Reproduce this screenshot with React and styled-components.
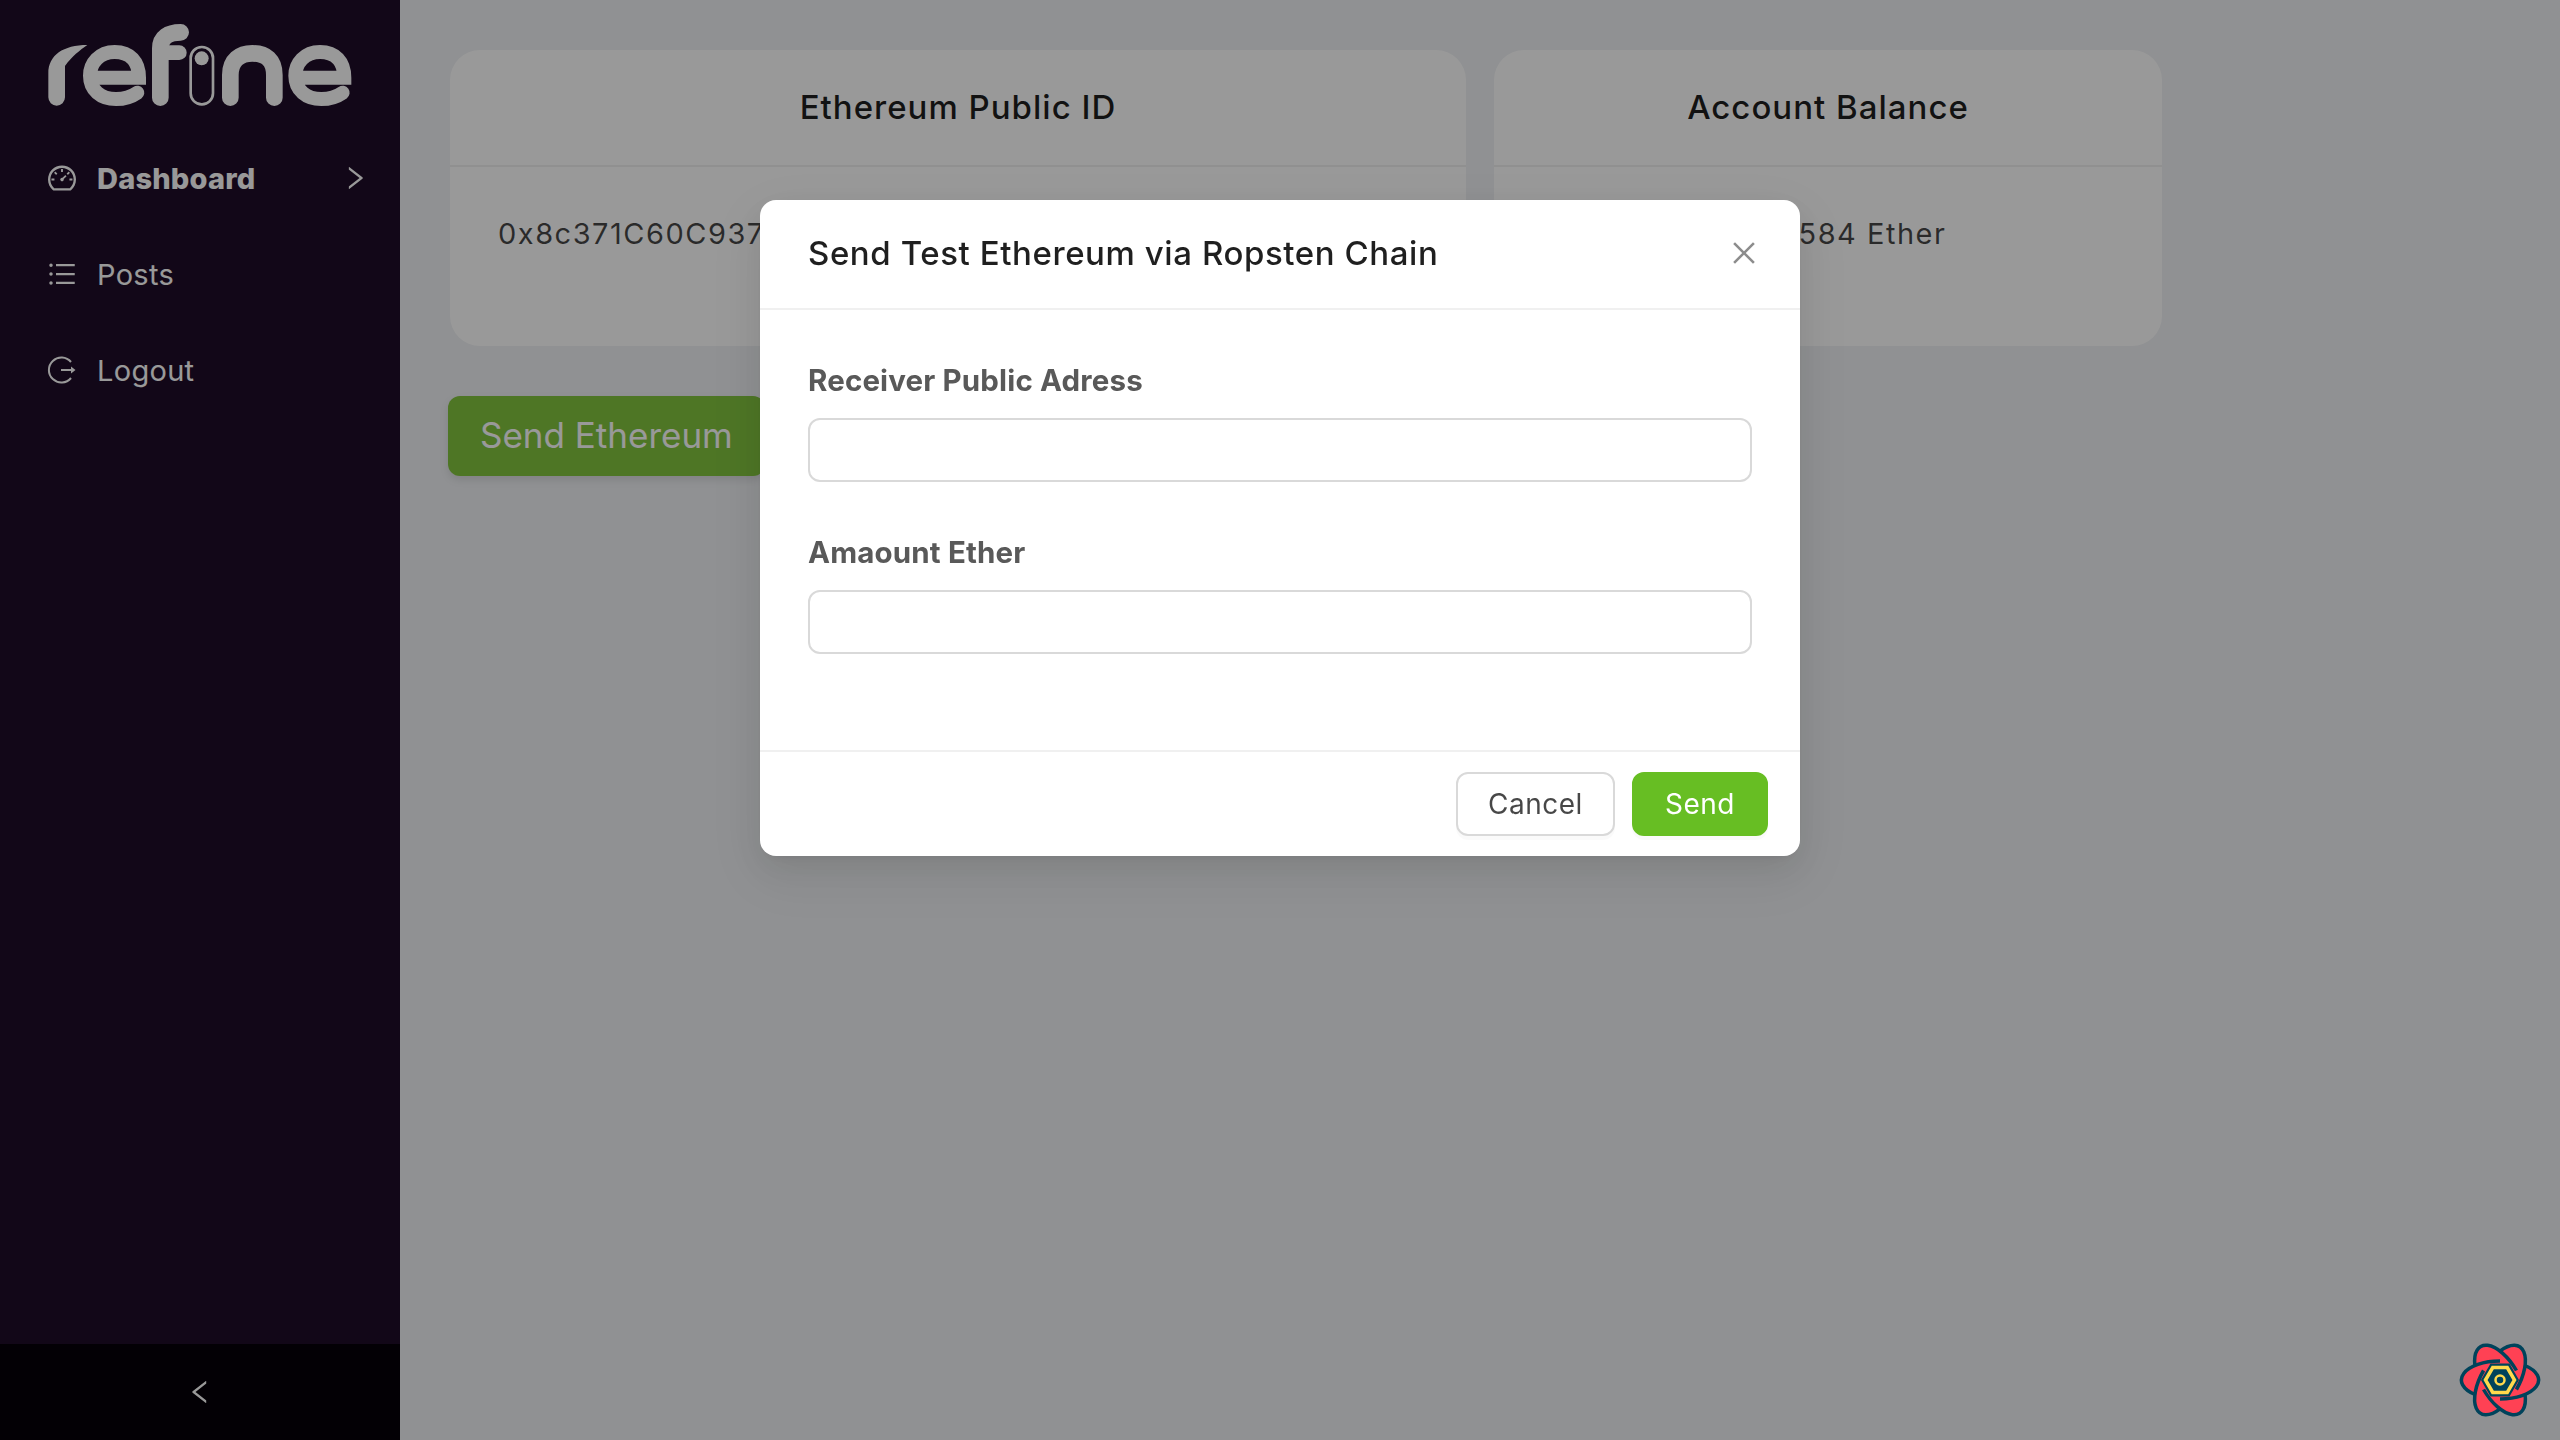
import React from 'react'
import styled, { createGlobalStyle } from 'styled-components'
import {
  AiOutlineDashboard,
  AiOutlineUnorderedList,
  AiOutlineRight,
  AiOutlineLeft,
  AiOutlineClose,
} from 'react-icons/ai'

const GlobalStyle = createGlobalStyle`
  html, body {
    margin: 0;
    padding: 0;
    overflow: hidden;
    font-family: 'Inter', 'Noto Sans', sans-serif;
  }
  * {
    box-sizing: border-box;
  }
`

const Page = styled.div`
  display: flex;
  width: 100%;
  height: 100vh;
  background: #f0f2f5;
`

// sidebar

const Sider = styled.aside`
  display: flex;
  flex-direction: column;
  flex: 0 0 400px;
  background: #1e0c28;
  color: #fff;
`

const LogoBox = styled.div`
  padding: 10px 30px 18px;
  line-height: 0;
`

const Menu = styled.nav`
  flex: 1;
`

const MenuRow = styled.div`
  display: flex;
  align-items: center;
  gap: 19px;
  height: 80px;
  margin-bottom: 16px;
  padding: 0 30px 0 46px;
  font-size: 29px;
  letter-spacing: ${(p) => (p.$active ? '0.2px' : '0.3px')};
  font-weight: ${(p) => (p.$active ? 800 : 400)};

  svg {
    flex: none;
  }
`

const MenuLabel = styled.span`
  flex: 1;
`

const SiderFooter = styled.div`
  display: flex;
  align-items: center;
  justify-content: center;
  height: 96px;
  background: #060009;
`

// main content

const Main = styled.main`
  flex: 1;
  padding: 50px;
`

const Cards = styled.div`
  display: flex;
  gap: 28px;
`

const Card = styled.section`
  flex: 0 0 ${(p) => p.$width}px;
  overflow: hidden;
  background: #fff;
  border-radius: 30px;
`

const CardHead = styled.h2`
  height: 117px;
  margin: 0;
  padding-top: 35px;
  border-bottom: 2px solid #f0f0f0;
  font-size: 33px;
  line-height: 44px;
  font-weight: 500;
  letter-spacing: 1px;
  text-align: center;
  color: rgba(0, 0, 0, 0.88);
`

const CardBody = styled.div`
  height: 179px;
  padding: 45px 48px;
  font-size: 29px;
  line-height: 44px;
  letter-spacing: 1.5px;
  white-space: nowrap;
  color: rgba(0, 0, 0, 0.72);
`

const SendEthereum = styled.button`
  display: block;
  height: 80px;
  margin: 50px 0 0 -2px;
  padding: 0 32px 2px;
  border: 0;
  border-radius: 12px;
  background: #82c53f;
  box-shadow: 0 4px 8px rgba(0, 0, 0, 0.1);
  font: 400 35px 'Inter', sans-serif;
  color: #fff;
`

// modal

const Mask = styled.div`
  position: fixed;
  inset: 0;
  display: flex;
  justify-content: center;
  align-items: flex-start;
  padding-top: 200px;
  background: rgba(0, 0, 0, 0.4);
`

const Modal = styled.div`
  width: 1040px;
  background: #fff;
  border-radius: 16px;
  box-shadow: 0 6px 12px -8px rgba(0, 0, 0, 0.12), 0 12px 32px rgba(0, 0, 0, 0.08),
    0 18px 56px 16px rgba(0, 0, 0, 0.05);
`

const ModalHead = styled.header`
  display: flex;
  align-items: center;
  justify-content: space-between;
  height: 110px;
  padding: 0 40px 2px 48px;
  border-bottom: 2px solid #f0f0f0;
`

const ModalTitle = styled.h1`
  margin: 0;
  font-size: 33px;
  font-weight: 500;
  letter-spacing: 0.58px;
  color: rgba(0, 0, 0, 0.88);
`

const CloseIcon = styled(AiOutlineClose)`
  color: rgba(0, 0, 0, 0.45);
`

const ModalBody = styled.div`
  padding: 48px 48px 0;
  border-bottom: 2px solid #f0f0f0;
`

const Field = styled.div`
  margin-bottom: 48px;

  &:last-child {
    margin-bottom: 96px;
  }
`

const Label = styled.label`
  display: block;
  height: 44px;
  margin-bottom: 16px;
  font-size: 29.5px;
  line-height: 44px;
  font-weight: 700;
  letter-spacing: 0.15px;
  color: #595959;
`

const Input = styled.input`
  display: block;
  width: 100%;
  height: 64px;
  border: 2px solid #d9d9d9;
  border-radius: 12px;
  background: #fff;
  outline: none;
`

const ModalFooter = styled.footer`
  display: flex;
  justify-content: flex-end;
  gap: 17px;
  padding: 20px 32px;
`

const FooterButton = styled.button`
  width: ${(p) => p.$width}px;
  height: 64px;
  padding: 0;
  border: 2px solid ${(p) => (p.$primary ? '#67be23' : '#d9d9d9')};
  border-radius: 12px;
  background: ${(p) => (p.$primary ? '#67be23' : '#fff')};
  box-shadow: 0 4px 0 rgba(0, 0, 0, 0.02);
  font: 400 28px 'Inter', sans-serif;
  letter-spacing: 0.5px;
  color: ${(p) => (p.$primary ? '#fff' : 'rgba(0, 0, 0, 0.72)')};
`

const DevtoolsButton = styled.div`
  position: fixed;
  right: 19px;
  bottom: 22px;
  line-height: 0;
`

// drawings

function RefineLogo() {
  const letterE =
    'M182 203 H327 C327 155 300 126 254 126 C208 126 180 160 180 197 C180 240 212 267 258 267 C285 267 305 260 322 248'
  return (
    <svg width="340" height="110" viewBox="0 0 1020 330" fill="none" stroke="currentColor" strokeLinecap="round">
      <path
        fill="currentColor"
        stroke="none"
        d="M55 190 C55 135 100 105 172 105 C150 120 125 140 105 168 V262 A25 25 0 0 1 55 262 Z"
      />
      <path strokeWidth="42" d={letterE} />
      <path strokeWidth="50" d="M391 263 V115 C391 82 415 67 452 67" />
      <path strokeWidth="44" d="M391 128 H448" />
      <rect x="482" y="111" width="67" height="172" rx="33" strokeWidth="8" />
      <circle cx="515" cy="145" r="21" fill="currentColor" stroke="none" />
      <path strokeWidth="50" d="M601 263 V195 C601 150 630 130 667 130 C708 130 733 150 733 195 V263" />
      <path strokeWidth="42" d={letterE} transform="translate(616 0)" />
    </svg>
  )
}

function LogoutIcon() {
  return (
    <svg width="32" height="32" viewBox="-2 -2 32 32" fill="none" stroke="currentColor" strokeWidth="2">
      <path d="M23 6 A12.5 12.5 0 1 0 23 22" />
      <path d="M13 14 H25" />
      <path d="M23 10.5 L27.5 14 L23 17.5 Z" fill="currentColor" stroke="none" />
    </svg>
  )
}

// each arc runs past the tip of a petal and stops where the next ellipse crosses it
function QueryFlower() {
  const ellipses = [0, 60, 120]
  const petals = [0, 60, 120, 180, 240, 300]
  return (
    <svg width="82" height="76" viewBox="-41 -38 82 76">
      {ellipses.map((a) => (
        <ellipse key={a} rx="38.5" ry="19" fill="#ff4154" transform={`rotate(${a})`} />
      ))}
      {petals.map((a) => (
        <path
          key={a}
          d="M0 19 A38.5 19 0 0 0 25 -14.5"
          fill="none"
          stroke="#00435b"
          strokeWidth="3.5"
          transform={`rotate(${a})`}
        />
      ))}
      <polygon points="-19,0 -9.5,-16.5 9.5,-16.5 19,0 9.5,16.5 -9.5,16.5" fill="#00435b" />
      <polygon points="-14.5,0 -7.25,-12.5 7.25,-12.5 14.5,0 7.25,12.5 -7.25,12.5" fill="none" stroke="#ffd94c" strokeWidth="3.5" />
      <circle r="4.5" fill="none" stroke="#ffd94c" strokeWidth="2.5" />
    </svg>
  )
}

export default function App() {
  return (
    <Page>
      <GlobalStyle />
      <Sider>
        <LogoBox>
          <RefineLogo />
        </LogoBox>
        <Menu>
          <MenuRow $active>
            <AiOutlineDashboard size={32} />
            <MenuLabel>Dashboard</MenuLabel>
            <AiOutlineRight size={30} />
          </MenuRow>
          <MenuRow>
            <AiOutlineUnorderedList size={32} />
            <MenuLabel>Posts</MenuLabel>
          </MenuRow>
          <MenuRow>
            <LogoutIcon />
            <MenuLabel>Logout</MenuLabel>
          </MenuRow>
        </Menu>
        <SiderFooter>
          <AiOutlineLeft size={30} />
        </SiderFooter>
      </Sider>

      <Main>
        <Cards>
          <Card $width={1016}>
            <CardHead>Ethereum Public ID</CardHead>
            <CardBody>0x8c371C60C937a1B04fE62D</CardBody>
          </Card>
          <Card $width={668}>
            <CardHead>Account Balance</CardHead>
            <CardBody>1.099999999999584 Ether</CardBody>
          </Card>
        </Cards>
        <SendEthereum>Send Ethereum</SendEthereum>
      </Main>

      <Mask>
        <Modal>
          <ModalHead>
            <ModalTitle>Send Test Ethereum via Ropsten Chain</ModalTitle>
            <CloseIcon size={32} />
          </ModalHead>
          <ModalBody>
            <Field>
              <Label>Receiver Public Adress</Label>
              <Input />
            </Field>
            <Field>
              <Label>Amaount Ether</Label>
              <Input />
            </Field>
          </ModalBody>
          <ModalFooter>
            <FooterButton $width={159}>Cancel</FooterButton>
            <FooterButton $width={136} $primary>
              Send
            </FooterButton>
          </ModalFooter>
        </Modal>
      </Mask>

      <DevtoolsButton>
        <QueryFlower />
      </DevtoolsButton>
    </Page>
  )
}
